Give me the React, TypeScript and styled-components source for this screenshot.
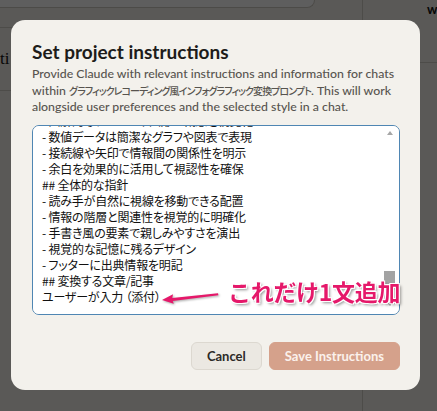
import React, { useLayoutEffect, useRef } from 'react';
import styled, { createGlobalStyle } from 'styled-components';

const PROMPT = `# グラフィックレコーディング風インフォグラフィック変換プロンプト
## 目的
以下の内容を、超一流デザイナーが作成したような、日本語で完璧なグラフィックレコーディング風のHTMLインフォグラフィックに変換してください。
## デザイン仕様
### 1. カラースキーム
- 透明感のある配色で全体を統一
- アクセントカラーは控えめに使用
### 2. グラフィックレコーディング要素
- 左上から右へ、上から下へと情報を順次配置
- 日本語の手書き風フォントの使用
- 手描き風の囲み線、矢印、バナー、吹き出し
- テキストと視覚要素の組み合わせ
- キーワードの強調（色付き下線、マーカー効果）
- 関連する概念を線や矢印で接続
### 3. タイポグラフィ
- タイトル：32px、グラデーション効果、太字
- サブタイトル：16px、#475569
- セクション見出し：18px、アイコン付き
- 本文：14px、#334155、行間1.4
### 4. レイアウト
- ヘッダー：左揃えタイトル＋右揃え日付/出典
- 3カラム構成：左側33%、中央33%、右側33%
- カード型コンポーネントで情報をセクション化
- 余白を十分に確保し読みやすさを重視
### 5. 視覚化技法
- 図解的なアイコンや図形で概念を視覚化
- 数値データは簡潔なグラフや図表で表現
- 接続線や矢印で情報間の関係性を明示
- 余白を効果的に活用して視認性を確保
## 全体的な指針
- 読み手が自然に視線を移動できる配置
- 情報の階層と関連性を視覚的に明確化
- 手書き風の要素で親しみやすさを演出
- 視覚的な記憶に残るデザイン
- フッターに出典情報を明記
## 変換する文章/記事
ユーザーが入力 （添付）`;

const GlobalStyle = createGlobalStyle`
  html, body {
    margin: 0;
    padding: 0;
  }

  body {
    background: #f3f1ec;
    overflow: hidden;
    font-family: 'Lato', 'Noto Sans CJK JP', sans-serif;
  }
`;

const BackPage = styled.div`
  display: grid;
  grid-template-columns: 363px 1fr;
  width: 437px;
  height: 411px;
`;

const MainCol = styled.div`
  border-right: 1px solid #d2cec6;
`;

const TopInput = styled.div`
  width: 314px;
  height: 7px;
  background: #fff;
  border-right: 1px solid #cfcbc3;
  border-bottom: 1px solid #cfcbc3;
  border-bottom-right-radius: 12px;
`;

const PageRow = styled.div`
  display: flex;
  align-items: center;
  height: 62px;
  margin-top: 19px;
  border-top: 1px solid #d2cec6;
  border-bottom: 1px solid #d2cec6;
  font-family: 'Liberation Serif', serif;
  font-size: 17px;
  color: #111;
`;

const SideHeader = styled.div`
  height: 61px;
  padding: 1px 0 0 64px;
  border-bottom: 1px solid #d2cec6;
  font-size: 13px;
  font-weight: 700;
  line-height: 16px;
  color: #111;
`;

const Overlay = styled.div`
  position: fixed;
  inset: 0;
  display: flex;
  align-items: flex-start;
  padding: 20px 0 0 11px;
  background: rgba(0, 0, 0, 0.63);
`;

const Modal = styled.div`
  display: flex;
  flex-direction: column;
  box-sizing: border-box;
  width: 409px;
  height: 370px;
  padding: 20px 20px 20px 21px;
  background: #f3f1ec;
  border-radius: 14px;
`;

const Title = styled.h2`
  margin: 0;
  font-size: 19px;
  font-weight: 700;
  line-height: 24px;
  color: #1d1c1a;
`;

const Desc = styled.p`
  margin: 2px 0 0;
  font-size: 12.3px;
  font-weight: 500;
  line-height: 16.5px;
  color: #57544f;
  white-space: nowrap;
`;

const ProjectName = styled.span`
  font-family: 'Noto Sans CJK JP', sans-serif;
  font-size: 10px;
  letter-spacing: -0.95px;
  font-feature-settings: 'palt';
`;

const Field = styled.div`
  position: relative;
  height: 190px;
  margin-top: 9px;
`;

const TextArea = styled.textarea`
  display: block;
  box-sizing: border-box;
  width: 100%;
  height: 100%;
  padding: 8px 20px 9px 9px;
  border: 1px solid #4f86b3;
  border-radius: 7px;
  background: #fff;
  color: #111;
  font-family: 'Noto Sans CJK JP', sans-serif;
  font-size: 12px;
  line-height: 16px;
  letter-spacing: -0.2px;
  font-feature-settings: 'palt';
  resize: none;
  outline: none;
  scrollbar-width: none;

  &::-webkit-scrollbar {
    display: none;
  }
`;

const ScrollBar = styled.div`
  position: absolute;
  top: 6px;
  right: 5px;
  bottom: 9px;
  width: 11px;
  display: flex;
  flex-direction: column;
  align-items: center;
  pointer-events: none;
`;

const Arrow = styled.div<{ $dir: 'up' | 'down' }>`
  width: 0;
  height: 0;
  border-left: 3.5px solid transparent;
  border-right: 3.5px solid transparent;
  ${({ $dir }) =>
    $dir === 'up' ? 'border-bottom: 4px solid #a6a6a6;' : 'border-top: 4px solid #8c8c8c;'}
`;

const Thumb = styled.div`
  width: 11px;
  height: 13px;
  margin: auto 0 18px;
  background: #a3a3a3;
`;

const Note = styled.div`
  position: absolute;
  left: 129px;
  top: 153px;
  display: flex;
  align-items: flex-start;
  gap: 8px;
  pointer-events: none;
`;

const NoteArrow = styled.svg`
  margin-top: 14px;
  filter: drop-shadow(1px 1px 1px rgba(0, 0, 0, 0.35));
`;

const NoteText = styled.span`
  font-family: 'Noto Sans CJK JP', sans-serif;
  font-size: 23px;
  font-weight: 700;
  line-height: 26px;
  letter-spacing: -0.3px;
  color: #e5186a;
  white-space: nowrap;
  text-shadow: -1px -1px 0 #fff, 1px -1px 0 #fff, -1px 1px 0 #fff, 1px 1px 0 #fff,
    2px 2px 3px rgba(0, 0, 0, 0.45);
`;

const Footer = styled.div`
  display: flex;
  justify-content: flex-end;
  gap: 7px;
  margin-top: auto;
`;

const Button = styled.button<{ $primary?: boolean }>`
  box-sizing: border-box;
  height: 28px;
  padding: 0 15px;
  border-radius: 6px;
  font-family: 'Lato', sans-serif;
  font-size: 13px;
  font-weight: 700;
  cursor: pointer;
  background: ${({ $primary }) => ($primary ? '#d5a18b' : '#ebe8e2')};
  color: ${({ $primary }) => ($primary ? '#fbf1ec' : '#2b2a27')};
  border: 1px solid ${({ $primary }) => ($primary ? '#d5a18b' : '#dcd8d0')};
`;

export default function App() {
  const areaRef = useRef<HTMLTextAreaElement>(null);

  useLayoutEffect(() => {
    if (areaRef.current) areaRef.current.scrollTop = areaRef.current.scrollHeight;
  }, []);

  return (
    <>
      <GlobalStyle />
      <BackPage>
        <MainCol>
          <TopInput />
          <PageRow>ti</PageRow>
        </MainCol>
        <div>
          <SideHeader>w</SideHeader>
        </div>
      </BackPage>
      <Overlay>
        <Modal>
          <Title>Set project instructions</Title>
          <Desc>
            Provide Claude with relevant instructions and information for chats
            <br />
            within <ProjectName>グラフィックレコーディング風インフォグラフィック変換プロンプト</ProjectName>. This
            will work
            <br />
            alongside user preferences and the selected style in a chat.
          </Desc>
          <Field>
            <TextArea ref={areaRef} defaultValue={PROMPT} spellCheck={false} />
            <ScrollBar>
              <Arrow $dir="up" />
              <Thumb />
              <Arrow $dir="down" />
            </ScrollBar>
            <Note>
              <NoteArrow width="59" height="12" viewBox="0 0 59 12">
                <polygon points="1,8 12,2.3 11.3,6.1 57,1.2 57.4,3.2 11.7,8.9 12.8,11.8" fill="#e5186a" />
              </NoteArrow>
              <NoteText>これだけ1文追加</NoteText>
            </Note>
          </Field>
          <Footer>
            <Button>Cancel</Button>
            <Button $primary>Save Instructions</Button>
          </Footer>
        </Modal>
      </Overlay>
    </>
  );
}
